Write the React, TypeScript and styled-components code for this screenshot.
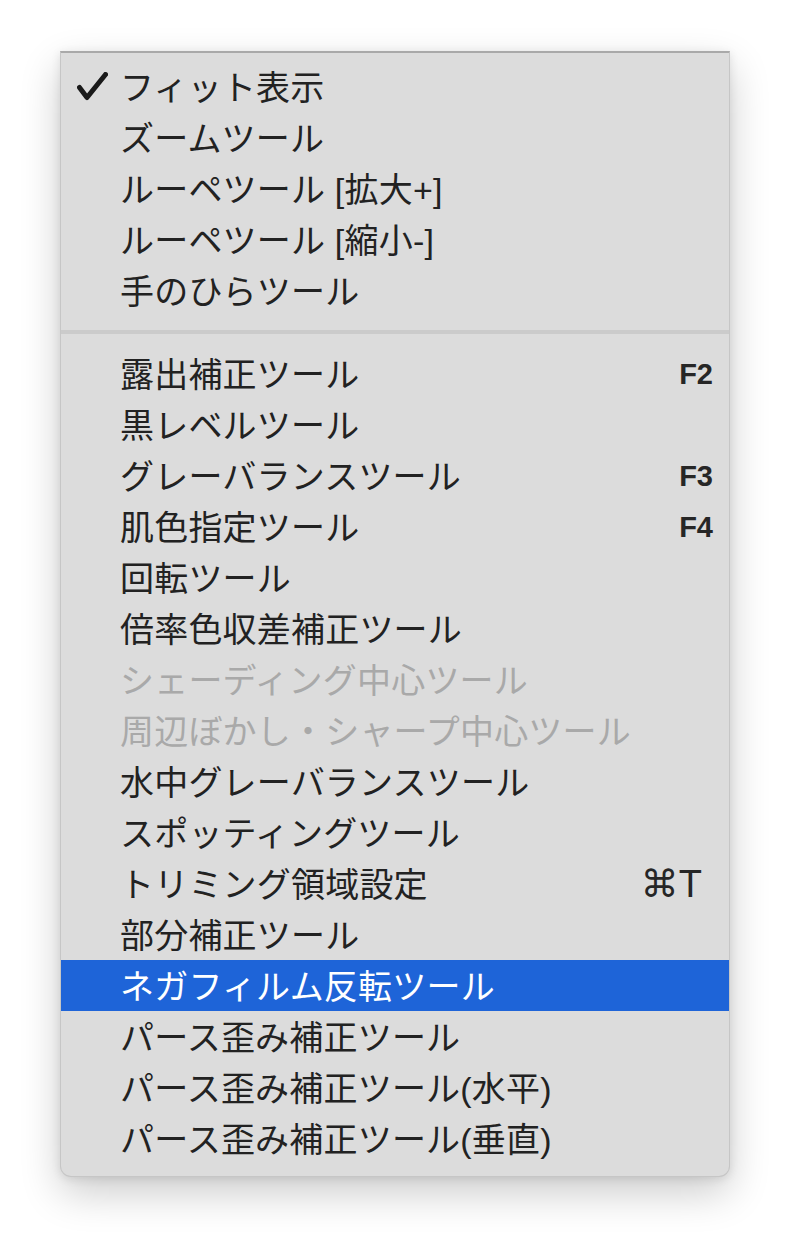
import React, {FC} from "react";
import styled, {createGlobalStyle} from "styled-components";

const GlobalStyle = createGlobalStyle`
  html, body {
    margin: 0;
    padding: 0;
    background: #ffffff;
  }
  body {
    font-family: "Liberation Sans", "Noto Sans CJK JP", sans-serif;
  }
`

const Page = styled.div`
  padding: 51px 0 70px 60px;
`

const Menu = styled.div`
  width: 668px;
  background: #dcdcdc;
  border: 1px solid #c6c6c6;
  border-top: 2px solid #a9a9a9;
  border-radius: 0 0 11px 11px;
  padding: 8px 0 12px;
  box-shadow: 0 16px 40px rgba(0, 0, 0, 0.2), 0 2px 10px rgba(0, 0, 0, 0.1);
`

const Row = styled.div<{ $active?: boolean; $disabled?: boolean }>`
  display: flex;
  align-items: center;
  height: 51px;
  padding: 0 0 0 16px;
  background: ${p => p.$active ? "#1e64d8" : "transparent"};
  color: ${p => p.$active ? "#ffffff" : p.$disabled ? "#a9a9a9" : "#222222"};
`

const CheckSlot = styled.div`
  width: 43px;
  height: 51px;
  display: flex;
  align-items: center;
  flex-shrink: 0;
`

const Label = styled.span`
  flex: 1;
  font-size: 34px;
  line-height: 51px;
  padding-top: 3px;
  white-space: nowrap;
  letter-spacing: 0.2px;
`

const Shortcut = styled.span<{ $cmd?: boolean }>`
  font-family: "Liberation Sans", "DejaVu Sans", sans-serif;
  font-size: ${p => p.$cmd ? "38px" : "29px"};
  font-weight: ${p => p.$cmd ? 400 : 700};
  padding-right: ${p => p.$cmd ? "27px" : "16px"};
  padding-top: 2px;
  color: #262626;
  line-height: 51px;
`

const Separator = styled.div`
  height: 4px;
  margin: 14px 0;
  background: #cbcbcb;
`

const CheckMark: FC = () => (
    <svg width="31" height="29" viewBox="0 0 31 29">
        <path d="M2.5 15.5 L10 25.5 L28.5 2.5" fill="none" stroke="#1a1a1a" strokeWidth="5"
              strokeLinecap="round" strokeLinejoin="round"/>
    </svg>
)

type Item = {
    label: string;
    key?: string;
    cmd?: boolean;
    checked?: boolean;
    disabled?: boolean;
    active?: boolean;
}

const viewItems: Item[] = [
    {label: "フィット表示", checked: true},
    {label: "ズームツール"},
    {label: "ルーペツール [拡大+]"},
    {label: "ルーペツール [縮小-]"},
    {label: "手のひらツール"},
]

const toolItems: Item[] = [
    {label: "露出補正ツール", key: "F2"},
    {label: "黒レベルツール"},
    {label: "グレーバランスツール", key: "F3"},
    {label: "肌色指定ツール", key: "F4"},
    {label: "回転ツール"},
    {label: "倍率色収差補正ツール"},
    {label: "シェーディング中心ツール", disabled: true},
    {label: "周辺ぼかし・シャープ中心ツール", disabled: true},
    {label: "水中グレーバランスツール"},
    {label: "スポッティングツール"},
    {label: "トリミング領域設定", key: "⌘T", cmd: true},
    {label: "部分補正ツール"},
    {label: "ネガフィルム反転ツール", active: true},
    {label: "パース歪み補正ツール"},
    {label: "パース歪み補正ツール(水平)"},
    {label: "パース歪み補正ツール(垂直)"},
]

const MenuRow: FC<{ item: Item }> = ({item}) => (
    <Row $active={item.active} $disabled={item.disabled}>
        <CheckSlot>{item.checked && <CheckMark/>}</CheckSlot>
        <Label>{item.label}</Label>
        {item.key && <Shortcut $cmd={item.cmd}>{item.key}</Shortcut>}
    </Row>
)

const App: FC = () => {
    return (
        <React.Fragment>
            <GlobalStyle/>
            <Page>
                <Menu>
                    {viewItems.map(item => <MenuRow key={item.label} item={item}/>)}
                    <Separator/>
                    {toolItems.map(item => <MenuRow key={item.label} item={item}/>)}
                </Menu>
            </Page>
        </React.Fragment>
    )
}

export default App;
